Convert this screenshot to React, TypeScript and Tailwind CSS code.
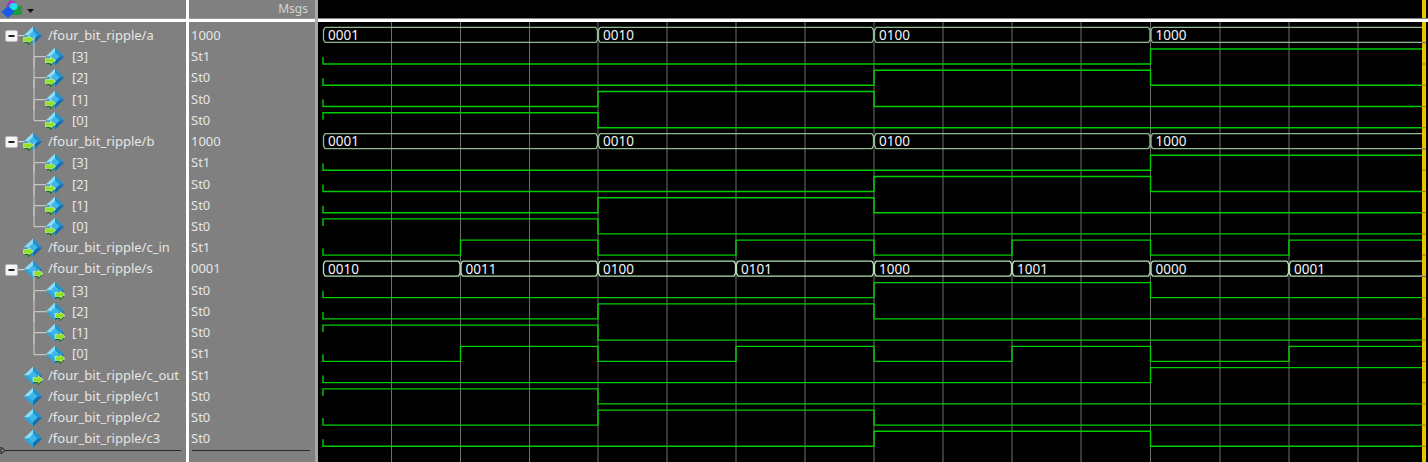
import React, { FC } from 'react';

type Row = {
  label: string;
  value: string;
  kind: 'in' | 'out' | 'none';
  child?: boolean;
  last?: boolean;
  expander?: boolean;
  bits?: string;
  bus?: string[];
};

const rows: Row[] = [
  { label: '/four_bit_ripple/a', value: '1000', kind: 'in', expander: true, bus: ['0001', '0010', '0100', '1000'] },
  { label: '[3]', value: 'St1', kind: 'in', child: true, bits: '00000011' },
  { label: '[2]', value: 'St0', kind: 'in', child: true, bits: '00001100' },
  { label: '[1]', value: 'St0', kind: 'in', child: true, bits: '00110000' },
  { label: '[0]', value: 'St0', kind: 'in', child: true, last: true, bits: '11000000' },
  { label: '/four_bit_ripple/b', value: '1000', kind: 'in', expander: true, bus: ['0001', '0010', '0100', '1000'] },
  { label: '[3]', value: 'St1', kind: 'in', child: true, bits: '00000011' },
  { label: '[2]', value: 'St0', kind: 'in', child: true, bits: '00001100' },
  { label: '[1]', value: 'St0', kind: 'in', child: true, bits: '00110000' },
  { label: '[0]', value: 'St0', kind: 'in', child: true, last: true, bits: '11000000' },
  { label: '/four_bit_ripple/c_in', value: 'St1', kind: 'in', bits: '01010101' },
  {
    label: '/four_bit_ripple/s',
    value: '0001',
    kind: 'out',
    expander: true,
    bus: ['0010', '0011', '0100', '0101', '1000', '1001', '0000', '0001'],
  },
  { label: '[3]', value: 'St0', kind: 'out', child: true, bits: '00001100' },
  { label: '[2]', value: 'St0', kind: 'out', child: true, bits: '00110000' },
  { label: '[1]', value: 'St0', kind: 'out', child: true, bits: '11000000' },
  { label: '[0]', value: 'St1', kind: 'out', child: true, last: true, bits: '01010101' },
  { label: '/four_bit_ripple/c_out', value: 'St1', kind: 'out', bits: '00000011' },
  { label: '/four_bit_ripple/c1', value: 'St0', kind: 'none', bits: '11000000' },
  { label: '/four_bit_ripple/c2', value: 'St0', kind: 'none', bits: '00110000' },
  { label: '/four_bit_ripple/c3', value: 'St0', kind: 'none', bits: '00001100' },
];

const PITCH = 21.24;
const XS = [323, 460.5, 598, 736, 874, 1012, 1150.5, 1289, 1422];
const GRID = [391.5, 460.5, 529.5, 598, 667, 736, 805, 874, 943, 1012, 1081, 1150.5, 1220, 1289, 1358];

const lowY = (i: number) => 64 + (i - 1) * PITCH;

const SignalIcon: FC<{ row: Row }> = ({ row }) => {
  const cx = row.child ? 55 : 33;
  const cy = 10.6;
  const width = row.child ? 72 : 48;
  const ax = row.kind === 'out' ? cx : cx - 9.5;
  return (
    <svg width={width} height={PITCH} className="shrink-0 overflow-visible">
      {row.child && (
        <path
          d={`M34 ${-PITCH / 2 + 1} V${row.last ? cy : PITCH} M34 ${cy} H47`}
          stroke="#c4c4c4"
          strokeWidth="1.2"
          fill="none"
        />
      )}
      {row.expander && (
        <g>
          <path d={`M18 ${cy} H25`} stroke="#d0d0d0" strokeWidth="1.2" />
          <rect x="5.5" y="5.5" width="12" height="11" rx="1.5" fill="#f4f4f4" stroke="#b8b8c8" />
          <rect x="8.5" y="10" width="6" height="2" fill="#202020" />
        </g>
      )}
      <polygon points={`${cx},${cy - 9} ${cx - 9.3},${cy} ${cx},${cy} `} fill="#8edcf6" />
      <polygon points={`${cx},${cy - 9} ${cx + 9.3},${cy} ${cx},${cy}`} fill="#1f93d0" />
      <polygon points={`${cx - 9.3},${cy} ${cx},${cy + 9} ${cx},${cy}`} fill="#2ba6dc" />
      <polygon points={`${cx + 9.3},${cy} ${cx},${cy + 9} ${cx},${cy}`} fill="#136fae" />
      <polygon
        points={`${cx},${cy - 4.5} ${cx + 4.6},${cy} ${cx},${cy + 4.5} ${cx - 4.6},${cy}`}
        fill="#3fb6ea"
      />
      {row.kind !== 'none' && (
        <g>
          <polygon
            points={`${ax},${cy + 2} ${ax + 5},${cy + 2} ${ax + 5},${cy} ${ax + 10},${cy + 4} ${ax + 5},${cy + 8} ${ax + 5},${cy + 6} ${ax},${cy + 6}`}
            fill="#8fe31e"
            stroke="#f4fff0"
            strokeWidth="0.5"
          />
          <path d={`M${ax + 1} ${cy + 7} H${ax + 5} V${cy + 9} L${ax + 9} ${cy + 5.5}`} stroke="#0f6a18" strokeWidth="1" fill="none" />
        </g>
      )}
    </svg>
  );
};

const Wave: FC = () => {
  return (
    <svg width="1110" height="440" viewBox="318 22 1110 440" className="block">
      {GRID.map((x) => (
        <line key={x} x1={x} x2={x} y1="22" y2="462" stroke="#6e6e6e" strokeWidth="1" />
      ))}
      {rows.map((row, i) => {
        if (row.bits) {
          const low = lowY(i);
          const high = low - 15;
          const ys = row.bits.split('').map((b) => (b === '1' ? high : low));
          let d = `M323 ${ys[0] === high ? high + 7 : low - 7} V${ys[0]}`;
          ys.forEach((y, k) => {
            d += ` V${y} H${XS[k + 1]}`;
          });
          return <path key={i} d={d} fill="none" stroke="#00cc00" strokeWidth="1.4" />;
        }
        const low = lowY(i) - 0.3;
        const high = low - 15;
        const labels = row.bus || [];
        const step = 8 / labels.length;
        return (
          <g key={i}>
            {labels.map((text, k) => {
              const x1 = XS[k * step];
              const x2 = XS[(k + 1) * step];
              const end = k === labels.length - 1;
              const right = end ? '' : ` M${x2 - 2} ${high} L${x2 - 0.5} ${high + 3} V${low - 3} L${x2 - 2} ${low}`;
              return (
                <g key={k}>
                  <path
                    d={`M${x1 + 2} ${high} H${end ? x2 : x2 - 2} M${x1 + 2} ${low} H${end ? x2 : x2 - 2} M${x1 + 2} ${high} L${x1 + 0.5} ${high + 3} V${low - 3} L${x1 + 2} ${low}${right}`}
                    fill="none"
                    stroke={i === 11 ? '#b4e0b4' : '#8fba8f'}
                    strokeWidth="1.3"
                  />
                  <text
                    x={x1 + 5}
                    y={low - 2.5}
                    fill="#f2f6fa"
                    fontSize="13.5"
                    fontFamily='"Noto Sans", sans-serif'
                  >
                    {text}
                  </text>
                </g>
              );
            })}
          </g>
        );
      })}
      <rect x="1422" y="22" width="4" height="440" fill="#e8c400" />
      {rows.map((row, i) => {
        const low = lowY(i);
        return <rect key={i} x="1422" y={low - 0.5} width="4" height="1" fill={row.bits ? '#e85020' : '#6060c0'} />;
      })}
    </svg>
  );
};

const App: FC = () => {
  return (
    <div className="flex w-[1428px] h-[462px] overflow-hidden bg-black text-[13px] text-[#e6e6e6] font-['Noto_Sans',sans-serif]">
      <div className="w-[186px] bg-[#808080] flex flex-col shrink-0">
        <div className="h-[18px] flex items-center pl-[1px] gap-[10px]">
          <svg width="24" height="18" viewBox="0 0 24 18">
            <polygon points="5,6 9,0 15,2 11,8" fill="#b030c8" />
            <rect x="10" y="6" width="11" height="9" fill="#1f9a3c" />
            <ellipse cx="12.5" cy="6.5" rx="4" ry="3.5" fill="#22dcf0" />
            <polygon points="7,6 13.5,12 7,18 0.5,12" fill="#1858e8" />
          </svg>
          <svg width="7" height="4" viewBox="0 0 7 4" className="mt-[3px] -ml-[8px]">
            <polygon points="0,0 7,0 3.5,4" fill="#101010" />
          </svg>
        </div>
        <div className="h-[1px] bg-[#9a9a9a]" />
        <div className="h-[3px] bg-white" />
        <div className="pt-[3px]">
          {rows.map((row, i) => (
            <div key={i} className="flex items-center h-[21.24px] whitespace-nowrap">
              <SignalIcon row={row} />
              <span>{row.label}</span>
            </div>
          ))}
        </div>
        <div className="relative ml-[5px] w-[176px] h-[1.5px] bg-[#282828]">
          <svg width="6" height="9" viewBox="0 0 6 9" className="absolute -left-[5px] -top-[4px]">
            <polygon points="1,1 5,4.5 1,8" fill="#808080" stroke="#202020" />
          </svg>
        </div>
      </div>
      <div className="w-[3px] bg-white shrink-0" />
      <div className="w-[126px] bg-[#808080] flex flex-col shrink-0">
        <div className="h-[18px] flex items-center justify-end pr-[7px] text-[12px] text-[#d4d4d4]">Msgs</div>
        <div className="h-[1px] bg-[#9a9a9a]" />
        <div className="h-[3px] bg-white" />
        <div className="pt-[3px] pl-[2px]">
          {rows.map((row, i) => (
            <div key={i} className="flex items-center h-[21.24px]">
              {row.value}
            </div>
          ))}
        </div>
        <div className="ml-[3px] w-[118px] h-[1.5px] bg-[#282828]" />
      </div>
      <div className="w-[3px] bg-[#a8a8a8] shrink-0" />
      <div className="relative flex-1 flex flex-col">
        <div className="h-[18px]" />
        <div className="h-[1px] bg-[#808080]" />
        <div className="h-[3px] bg-white" />
        <Wave />
        <div className="absolute top-0 left-[1104px] w-[4px] h-[18px] bg-[#e8c400]" />
      </div>
    </div>
  );
};

export default App;
